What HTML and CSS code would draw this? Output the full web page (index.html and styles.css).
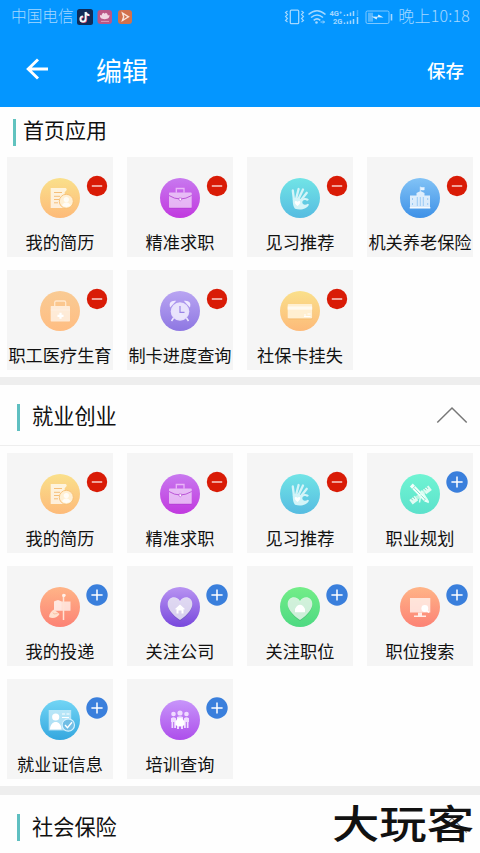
FILE: index.html
```html
<!DOCTYPE html>
<html lang="zh-CN">
<head>
<meta charset="utf-8">
<meta name="viewport" content="width=device-width">
<title>编辑</title>
<link rel="stylesheet" href="styles.css">
</head>
<body>
<svg class="defs" aria-hidden="true">
  <defs>
    <symbol id="minus" viewBox="0 0 22 22"><circle cx="11" cy="11" r="10.2" fill="#d91b06"/><path d="M5.8 11h10.4" stroke="#fff" stroke-opacity=".85" stroke-width="1.4"/></symbol>
    <symbol id="plus" viewBox="0 0 22 22"><circle cx="11" cy="11" r="10.7" fill="#3a7fdc"/><path d="M5.4 11h11.2M11 5.4v11.2" stroke="#fff" stroke-width="1.5"/></symbol>
    <symbol id="resume" viewBox="0 0 40 40">
      <path d="M10.700 10h15a2 2 0 0 1 1 2l-2 2.200V30h-14z" fill="#fff" fill-opacity=".72"/>
      <path d="M14 14.500h8M14 18.300h6M14 21.500h5M14 24.800h4" stroke="#f5be78" stroke-width="1"/>
      <circle cx="26.300" cy="23.300" r="7" fill="#fff0d4" stroke="#f6bd72" stroke-width=".9"/>
      <circle cx="26.300" cy="21.500" r="2.600" fill="#fffcf6"/><path d="M21.800 27.300q4.500-6 9 0-4.500 3.400-9 0z" fill="#fffcf6"/>
    </symbol>
    <symbol id="briefcase" viewBox="0 0 40 40">
      <path d="M16.300 14.500v-4h7.700v4" fill="none" stroke="#e9b5f8" stroke-width="1.300"/>
      <rect x="9" y="14.500" width="22.700" height="15.500" rx=".8" fill="#fff" fill-opacity=".58"/>
      <path d="M9 17.500q11 7 22.700 0" fill="none" stroke="#b549d4" stroke-width=".9"/>
      <path d="M19 20h2.600v2q-1.300 1.600-2.600 0z" fill="#fff" stroke="#b549d4" stroke-width=".6"/>
      <path d="M9 30.200h22.700" stroke="#ac37ce" stroke-width=".6"/>
    </symbol>
    <symbol id="hand" viewBox="0 0 40 40">
      <path d="M12.800 12.500 14 22M16.300 20 18.600 11M18.700 20.500 23 11.500M21.500 21.500 26.800 14.800" stroke="#d3f4f8" stroke-width="2.300" stroke-linecap="round"/>
      <path d="M12.800 20.500q5-2 8.700 1c2.500-2.500 6.500-1.800 7.300.2-.8 1.200-1.800 1.500-2.300.8-2.500-1.200-4.200 0-4.200 1.800 0 2.500 3 3 5.500 1.500l1.200.8c-2 4.700-8.700 6-14 4.200q-2.600-3.200-2.200-10.300z" fill="#d3f4f8"/>
      <path d="M17.500 28c-5-4-2-6.500 0-4.200 2-2.300 5 .2 0 4.200z" fill="#fff"/>
    </symbol>
    <symbol id="building" viewBox="0 0 40 40">
      <path d="M10 17.500h6.500V15l4-2 4 2v2.500H30v12.800H10z" fill="#fff" fill-opacity=".78"/>
      <path d="M20.300 13V8.700" stroke="#e8f4ff" stroke-width=".8"/><path d="M20.500 8.700q2 1 4 .2v3q-2 .7-4-.2z" fill="#e8f4ff"/>
      <path d="M17.300 19v9M20.300 19v9M23.300 19v9M12.500 20v2M12.500 25v2M27.700 20v2M27.700 25v2" stroke="#8cc2f3" stroke-width=".8"/>
      <path d="M9.700 29.800h20.700" stroke="#fff" stroke-width="1.200"/>
    </symbol>
    <symbol id="medkit" viewBox="0 0 40 40">
      <path d="M14.700 15v-3.500q0-1.500 1.500-1.500h8q1.500 0 1.500 1.500V15" fill="none" stroke="#ffe7cd" stroke-width="1.300"/>
      <rect x="10.700" y="15" width="19.300" height="15.400" rx=".7" fill="#fff" fill-opacity=".66"/>
      <path d="M10.700 19H30" stroke="#fff" stroke-opacity=".4" stroke-width=".7"/>
      <path d="M17.500 24.800h6M20.500 21.800v6" stroke="#fff" stroke-width="2.200"/>
    </symbol>
    <symbol id="clock" viewBox="0 0 40 40">
      <path d="M10.500 15q-1-4.300 4-4.500zM29.500 15q1-4.300-4-4.500zM13.500 27l-2 3M26.500 27l2 3" fill="#eee9ff" stroke="#eee9ff" stroke-width="1.500"/>
      <circle cx="20" cy="20.500" r="9.300" fill="#f0ecff" fill-opacity=".88"/><circle cx="20" cy="20.500" r="8" fill="#e9e4fc"/>
      <path d="M20 15v6.300h4.500" fill="none" stroke="#9a84e7" stroke-width="1.200"/>
    </symbol>
    <symbol id="card" viewBox="0 0 40 40">
      <rect x="8" y="14" width="24.300" height="14.300" rx="1" fill="#e7a54f" fill-opacity=".6"/>
      <rect x="7.700" y="13" width="24.500" height="14.500" rx="1" fill="#ffefd1"/>
      <path d="M7.700 15.500h24.500v3.200H7.700z" fill="#fffaf0"/>
      <path d="M24 24h2M27.500 23h3M24 25.500h6.500" stroke="#fff" stroke-width="1"/>
    </symbol>
    <symbol id="tools" viewBox="0 0 40 40">
      <g transform="rotate(-37 20 21)"><path d="M8.500 18.500h7v5.600h-7zM25.500 18.500h7v5.600h-7z" fill="#e2fbf3"/><path d="M15.500 19.500h10v3.600h-10z" fill="#b9f5e2"/><path d="M11 18.500v2.300M13.500 18.500v2.300M27.500 18.500v2.300M30 18.500v2.300" stroke="#52d7b8" stroke-width=".8"/></g>
      <g transform="rotate(46 20 20)"><path d="M7.500 18h21l4.500 2-4.500 2h-21z" fill="#f2fffb"/><path d="M11 18v4M27.500 18v4M12 20h15" stroke="#77dec6" stroke-width=".8"/></g>
      <path d="m21.500 16.500 7 11.500M21.500 16.500l-2 12" stroke="#dcfff5" stroke-width="1.500"/>
    </symbol>
    <symbol id="mailbox" viewBox="0 0 40 40">
      <path d="M14 14.500 18 13l4 1.500h8.500v9.200H14z" fill="#fff" fill-opacity=".68"/>
      <path d="M14 14.500q4.500-3 7.500 1v8H14z" fill="#fff" fill-opacity=".25"/>
      <path d="M23.500 33V8h2" fill="none" stroke="#ffe3d5" stroke-width="1.500"/><circle cx="23.800" cy="8.400" r="1.700" fill="#fff0e8"/>
      <path d="m14 22.500 5.500 4.500c-2.300 3.500-6.500 5.200-10.500 3 .2-3.500 2.500-6 5-7.500z" fill="#ffe0cf"/><path d="m13 25.500 1 1.500 3.500-.5" fill="none" stroke="#f5ad87" stroke-width=".6"/>
    </symbol>
    <symbol id="heart" viewBox="0 0 40 40"><path d="M20 34C12 28.500 8 23 8 18c0-7.500 8.500-9.600 12-3 3.500-6.600 12.300-4.500 12.300 3 0 5-4.300 10.500-12.300 16z" fill="#205540" fill-opacity=".18"/><path d="M20 33C12 27.500 7.700 22 7.700 17c0-7.500 8.800-9.100 12.300-3 3.500-6.100 12.300-4.500 12.300 3 0 5-4.300 10.500-12.300 16z" fill="#fff" fill-opacity=".72"/></symbol>
    <symbol id="company" viewBox="0 0 40 40"><use href="#heart"/><path d="m14.800 22.300 5.200-4.800 5.200 4.800h-1.700v4.200h-2v-3h-3v3h-2v-4.200z" fill="#fff"/></symbol>
    <symbol id="position" viewBox="0 0 40 40"><use href="#heart"/><path d="M15 25.300v-3.500l2-2.800q3-2.500 6 0l2 2.800v3.500z" fill="#fff"/></symbol>
    <symbol id="monitor" viewBox="0 0 40 40">
      <path d="M10 11h20.300v14.500H10z" fill="#fff" fill-opacity=".7"/><path d="M18 25.500h4v3h4V30H14v-1.500h4z" fill="#ffece6"/>
      <circle cx="24.800" cy="21.500" r="3.400" fill="#fff"/><path d="m26.500 23.500 2.500 2" stroke="#fff" stroke-width="1.500"/>
    </symbol>
    <symbol id="identity" viewBox="0 0 40 40">
      <path d="M8.700 10h22.500v20.500H8.700z" fill="#fff" fill-opacity=".55"/><circle cx="15.700" cy="17" r="3.600" fill="#fff"/><path d="M10 29.500c0-10 11.500-10 11.500 0z" fill="#fff"/>
      <path d="M22 14h3M26.500 14h3M22 17.500h7" stroke="#fff" stroke-width="1"/>
      <circle cx="28.300" cy="25" r="6.200" fill="#70bee5" stroke="#d3f1ff" stroke-width="1.200"/><path d="m25 25 2.500 2.700 4.500-5.400" fill="none" stroke="#fff" stroke-width="1.400"/>
    </symbol>
    <symbol id="people" viewBox="0 0 40 40">
      <g fill="#f0dcff"><circle cx="13.500" cy="14" r="2.300"/><circle cx="20" cy="13" r="2.600"/><circle cx="26.500" cy="14" r="2.300"/><path d="M11 18.200q2.500-2 5 0V28h-1.800v-6h-1v6h-1.700v-6H11zM24 18.200q2.500-2 5 0V22h-.5v6h-1.700v-6h-1v6H24zM17 17q3-1.500 6 0v12h-2v-5h-2v5h-2z"/></g>
      <path d="M15.500 25v-3.500l2-3q2.500-1 5 0l2 3V25q-4.500 3-9 0z" fill="#fff"/>
    </symbol>
  </defs>
</svg>

<header class="header">
  <div class="status">
    <span class="carrier">中国电信</span>
    <svg class="apps" width="56" height="16" viewBox="0 0 56 16">
      <rect width="16" height="16" rx="2.500" fill="#102b58"/>
      <g fill="none" stroke-width="1.800"><path d="M8.800 3v7a2.600 2.600 0 1 1-2.600-2.600M8.800 3q.5 3 3.700 3" stroke="#f04b6e" transform="translate(.5 .4)"/><path d="M8.500 3v7a2.600 2.600 0 1 1-2.600-2.600M8.500 3q.5 3 3.700 3" stroke="#e8ffff"/></g>
      <rect x="20.500" y="1" width="14.500" height="14" rx="3" fill="#bb5686"/>
      <path d="M27.700 10.300c-3.700-.3-5-2-4.700-4.300l1.500.5q.2-2.300 2-2.700l1.200 1 1.200-1q1.800.4 2 2.700l1.500-.5c.3 2.300-1 4-4.700 4.300z" fill="#f2d5e3"/><path d="M24 12.400h8" stroke="#dc9dbc" stroke-width="1"/>
      <rect x="41" y="1" width="14" height="14" rx="3" fill="#d2714c"/><path d="m45.500 4 6 3.800-6 3.700 1.200-3.700z" fill="none" stroke="#fae5dc" stroke-width="1.400"/>
    </svg>
    <svg class="signals" width="109" height="18" viewBox="284 7 109 18" fill="none" stroke="#a5d8ff">
      <rect x="290.300" y="9.200" width="8.400" height="13.500" rx="1" stroke-width="1.300"/>
      <path d="m287.500 10-2 1.500 2 2-2 2 2 2-2 2 2 1.500M301.500 10l2 1.500-2 2 2 2-2 2 2 2-2 1.500" stroke-width="1.100"/>
      <path d="M308.500 13.500q8.500-7.500 17 0M311 16.500q6-5 12 0M313.700 19.300q3.300-2.800 6.600 0" stroke-width="1.600"/><circle cx="316.500" cy="21.500" r="1.300" fill="#a5d8ff" stroke="none"/><path d="M320.500 21h4l-1.500-1.500m1.500 1.500-1.500 1.500" stroke-width=".9"/>
      <g fill="#a5d8ff" stroke="none" font-family="Roboto, sans-serif" font-size="7.500" font-weight="700"><text x="329.500" y="15">4G⁺</text><text x="333" y="23">2G</text></g>
      <path d="M344.500 15v-1.200M347.500 15v-2M350.500 15v-3.500M353.500 15v-5M344.500 23v-1.500M347.500 23v-2.500M350.500 23v-3.500M353.500 23v-5M357.500 23v-7" stroke-width="1.500"/><path d="M357.500 15V9" stroke-opacity=".4" stroke-width="1.500"/>
      <rect x="366" y="10" width="23" height="12.500" rx="1.500" stroke-width="1" stroke-opacity=".75"/><path d="M368 11.700h5v9h-5z" fill="#8dcbfb" fill-opacity=".6" stroke="none"/><path d="M391.500 13v6.500" stroke-width="1.600"/><path d="m371.500 15.500 6 .2 1-2.200 5 3-6-.2-1 2.300z" fill="#d5edff" stroke="none"/>
    </svg>
    <span class="clock">晚上10:18</span>
  </div>
  <div class="toolbar">
    <svg class="back" width="24" height="22" viewBox="0 0 24 22"><path d="M12 1.500 2.200 11 12 20.500M2.500 11H22" fill="none" stroke="#fff" stroke-width="2.900"/></svg>
    <h1>编辑</h1>
    <span class="save">保存</span>
  </div>
</header>

<main>
  <section class="home">
    <div class="home-title"><h2>首页应用</h2></div>
    <div class="grid">
      <div class="tile"><span class="disc yellow"><svg><use href="#resume"/></svg></span><svg class="badge"><use href="#minus"/></svg><p>我的简历</p></div>
      <div class="tile"><span class="disc magenta"><svg><use href="#briefcase"/></svg></span><svg class="badge"><use href="#minus"/></svg><p>精准求职</p></div>
      <div class="tile"><span class="disc cyan"><svg><use href="#hand"/></svg></span><svg class="badge"><use href="#minus"/></svg><p>见习推荐</p></div>
      <div class="tile"><span class="disc blue"><svg><use href="#building"/></svg></span><svg class="badge"><use href="#minus"/></svg><p>机关养老保险</p></div>
      <div class="tile"><span class="disc peach"><svg><use href="#medkit"/></svg></span><svg class="badge"><use href="#minus"/></svg><p>职工医疗生育</p></div>
      <div class="tile"><span class="disc lilac"><svg><use href="#clock"/></svg></span><svg class="badge"><use href="#minus"/></svg><p>制卡进度查询</p></div>
      <div class="tile"><span class="disc yellow"><svg><use href="#card"/></svg></span><svg class="badge"><use href="#minus"/></svg><p>社保卡挂失</p></div>
    </div>
  </section>
  <section class="group">
    <div class="group-head"><h2>就业创业</h2><svg class="chevron" width="32" height="18" viewBox="0 0 32 18"><path d="M1.300 16.500 16 2l14.700 14.500" fill="none" stroke="#777" stroke-width="1.500"/></svg></div>
    <div class="grid">
      <div class="tile"><span class="disc yellow"><svg><use href="#resume"/></svg></span><svg class="badge"><use href="#minus"/></svg><p>我的简历</p></div>
      <div class="tile"><span class="disc magenta"><svg><use href="#briefcase"/></svg></span><svg class="badge"><use href="#minus"/></svg><p>精准求职</p></div>
      <div class="tile"><span class="disc cyan"><svg><use href="#hand"/></svg></span><svg class="badge"><use href="#minus"/></svg><p>见习推荐</p></div>
      <div class="tile"><span class="disc mint"><svg><use href="#tools"/></svg></span><svg class="badge"><use href="#plus"/></svg><p>职业规划</p></div>
      <div class="tile"><span class="disc orange"><svg><use href="#mailbox"/></svg></span><svg class="badge"><use href="#plus"/></svg><p>我的投递</p></div>
      <div class="tile"><span class="disc purple"><svg><use href="#company"/></svg></span><svg class="badge"><use href="#plus"/></svg><p>关注公司</p></div>
      <div class="tile"><span class="disc green"><svg><use href="#position"/></svg></span><svg class="badge"><use href="#plus"/></svg><p>关注职位</p></div>
      <div class="tile"><span class="disc orange"><svg><use href="#monitor"/></svg></span><svg class="badge"><use href="#plus"/></svg><p>职位搜索</p></div>
      <div class="tile"><span class="disc sky"><svg><use href="#identity"/></svg></span><svg class="badge"><use href="#plus"/></svg><p>就业证信息</p></div>
      <div class="tile"><span class="disc violet"><svg><use href="#people"/></svg></span><svg class="badge"><use href="#plus"/></svg><p>培训查询</p></div>
    </div>
  </section>
  <section class="group last">
    <div class="group-head"><h2>社会保险</h2><svg class="chevron" width="32" height="18" viewBox="0 0 32 18"><path d="M1.300 16.500 16 2l14.700 14.500" fill="none" stroke="#777" stroke-width="1.200"/></svg></div>
  </section>
</main>
<div class="watermark">大玩客</div>
</body>
</html>
```
FILE: styles.css
```css
* { box-sizing: border-box; }
html, body { margin: 0; height: 853px; overflow: hidden; }
body {
  position: relative;
  width: 480px;
  background: #fefefe;
  color: #111;
  font-family: "Noto Sans CJK SC", sans-serif;
}
h1, h2, p { margin: 0; font-weight: 400; }
svg { display: block; flex: none; }
.defs { position: absolute; width: 0; height: 0; }

.header { height: 107px; background: #0496ff; color: #fff; }
.status {
  display: flex;
  align-items: center;
  height: 33px;
  padding: 0 10px 0 11px;
  color: #a5d8ff;
  font-size: 15.7px;
  line-height: 30px;
  white-space: nowrap;
}
.carrier { width: 66px; margin-top: -1px; font-weight: 300; }
.signals { margin-left: 151px; }
.clock { margin: -3px 0 0 auto; font-size: 16px; font-weight: 300; letter-spacing: .2px; }
.toolbar {
  display: flex;
  align-items: center;
  height: 74px;
  padding: 0 16px 0 26px;
}
.toolbar h1 { margin-left: 46px; font-size: 26px; line-height: 72px; }
.back { margin-top: -2px; }
.save { margin-left: auto; font-size: 18.5px; font-weight: 500; line-height: 72px; }

.home { height: 277.5px; border-bottom: 8px solid #eee; }
.home-title {
  display: flex;
  align-items: center;
  height: 50px;
  padding-left: 13px;
}
.home-title h2 { padding-bottom: 5px; font-size: 21px; line-height: 45px; }
.home-title::before {
  content: "";
  width: 3px;
  height: 27px;
  margin: 1px 7px 0 0;
  background: #61c3bf;
}
.grid {
  display: grid;
  grid-template-columns: repeat(4, 106px);
  grid-auto-rows: 99.5px;
  gap: 13.6px 14px;
  padding-left: 7px;
}
.tile {
  position: relative;
  display: flex;
  flex-direction: column;
  align-items: center;
  padding-top: 21px;
  background: #f5f5f5;
}
.tile p {
  margin-top: 11px;
  font-size: 17.2px;
  line-height: 26px;
  white-space: nowrap;
}
.badge { position: absolute; top: 18px; left: 79px; width: 22px; height: 22px; }
.disc { width: 40px; height: 40px; border-radius: 50%; }
.disc svg { width: 40px; height: 40px; }
.yellow { background: linear-gradient(#fae08b, #fdba79); }
.magenta { background: linear-gradient(#c879ef, #c139df); }
.cyan { background: linear-gradient(#71e4e6, #56bce1); }
.blue { background: linear-gradient(#82c3f6, #3e91e7); }
.peach { background: linear-gradient(#f9cb94, #ffbd82); }
.lilac { background: linear-gradient(#b9a5f2, #8e77e2); }
.mint { background: linear-gradient(#70f4d3, #5ce1cb); }
.orange { background: linear-gradient(#ffb487, #fc8275); }
.purple { background: linear-gradient(#b893f2, #7848dc); }
.green { background: linear-gradient(#73ed88, #4ed982); }
.sky { background: linear-gradient(#72d5f5, #34a7df); }
.violet { background: linear-gradient(#c795fa, #ad4eeb); }

.group { height: 410.5px; border-bottom: 9px solid #eee; }
.group-head {
  display: flex;
  align-items: center;
  height: 61px;
  margin-bottom: 7.5px;
  padding: 0 12px 0 17px;
  border-bottom: 1px solid #eee;
}
.group-head h2 { display: flex; align-items: center; font-size: 21.2px; line-height: 59px; }
.group-head h2::before {
  content: "";
  width: 3px;
  height: 27px;
  margin: 5px 12px 0 0;
  background: #5fbfc1;
}
.chevron { margin-left: auto; }
.last { height: 58px; border: 0; overflow: hidden; }

.watermark {
  position: absolute;
  left: 334px;
  top: 794px;
  font-size: 46px;
  line-height: 54px;
  font-weight: 500;
  white-space: nowrap;
  transform: scale(1.03, .84);
}
```
